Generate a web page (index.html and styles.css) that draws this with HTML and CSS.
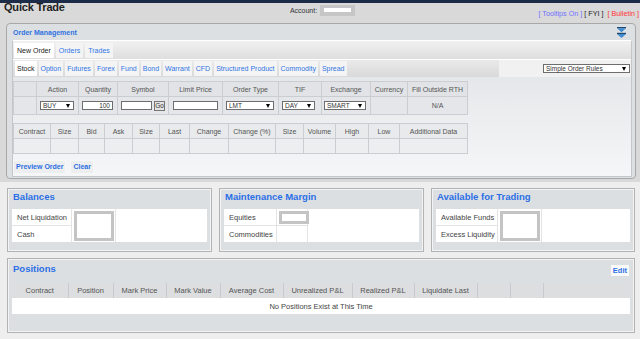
FILE: index.html
```html
<!DOCTYPE html>
<html>
<head>
<meta charset="utf-8">
<title>Quick Trade</title>
<link rel="stylesheet" href="styles.css">
</head>
<body>
<div class="upper">
  <header class="top">
    <h1 class="title">Quick Trade</h1>
    <div class="account">Account: <span class="acct-box"><span class="acct-inner"></span></span></div>
    <div class="links"><span class="l-tips">[ Tooltips On ]</span> <span class="l-fyi">[ FYI ]</span>  <span class="l-bull">[ Bulletin ]</span></div>
  </header>

  <section class="om">
    <div class="om-head">
      <span class="om-title">Order Management</span>
      <svg class="collapse" width="9" height="11" viewBox="0 0 9 11"><rect x="0" y="0" width="9" height="1.3" fill="#22476d"/><path d="M0 1.3h9L4.5 5.2z" fill="#3f8bd0"/><rect x="0" y="5.8" width="9" height="1.3" fill="#22476d"/><path d="M0 7.1h9L4.5 11z" fill="#3f8bd0"/></svg>
    </div>
    <div class="om-body">
      <div class="tabs1">
        <span class="tab sel">New Order</span><span class="tab">Orders</span><span class="tab">Trades</span>
      </div>
      <div class="tabs2row">
        <div class="tabs2">
          <span class="tab sel">Stock</span><span class="tab">Option</span><span class="tab">Futures</span><span class="tab">Forex</span><span class="tab">Fund</span><span class="tab">Bond</span><span class="tab">Warrant</span><span class="tab">CFD</span><span class="tab">Structured Product</span><span class="tab">Commodity</span><span class="tab">Spread</span>
        </div>
        <div class="rules"><span class="dd rules-dd">Simple Order Rules<i class="arr"></i></span></div>
      </div>

      <table class="grid order">
        <colgroup><col style="width:23px"><col style="width:42px"><col style="width:39px"><col style="width:51px"><col style="width:54px"><col style="width:56px"><col style="width:43px"><col style="width:49px"><col style="width:37px"><col style="width:60px"></colgroup>
        <tr class="hr"><th></th><th>Action</th><th>Quantity</th><th>Symbol</th><th>Limit Price</th><th>Order Type</th><th>TIF</th><th>Exchange</th><th>Currency</th><th>Fill Outside RTH</th></tr>
        <tr class="dr">
          <td></td>
          <td class="ctl"><span class="dd w34">BUY<i class="arr"></i></span></td>
          <td class="ctl"><span class="inp w31 num">100</span></td>
          <td class="ctl"><span class="inp w31"></span><span class="go">Go</span></td>
          <td class="ctl c4"><span class="inp w45"></span></td>
          <td class="ctl"><span class="dd w48">LMT<i class="arr"></i></span></td>
          <td class="ctl"><span class="dd w33">DAY<i class="arr"></i></span></td>
          <td class="ctl c2"><span class="dd w42">SMART<i class="arr"></i></span></td>
          <td></td>
          <td>N/A</td>
        </tr>
      </table>

      <table class="grid md">
        <colgroup><col style="width:37px"><col style="width:28px"><col style="width:26px"><col style="width:28px"><col style="width:27px"><col style="width:30px"><col style="width:39px"><col style="width:47px"><col style="width:28px"><col style="width:32px"><col style="width:33px"><col style="width:31px"><col style="width:68px"></colgroup>
        <tr class="hr"><th>Contract</th><th>Size</th><th>Bid</th><th>Ask</th><th>Size</th><th>Last</th><th>Change</th><th>Change (%)</th><th>Size</th><th>Volume</th><th>High</th><th>Low</th><th>Additional Data</th></tr>
        <tr class="dr"><td></td><td></td><td></td><td></td><td></td><td></td><td></td><td></td><td></td><td></td><td></td><td></td><td></td></tr>
      </table>

      <div class="actions"><span class="btn">Preview Order</span><span class="btn">Clear</span></div>
    </div>
  </section>
</div>

<div class="lower">
  <div class="summary">
    <section class="card">
      <h2 class="card-title">Balances</h2>
      <div class="kv kv-bal">
        <div class="lbl r1">Net Liquidation</div>
        <div class="val span2"><div class="vbox big"></div></div>
        <div class="rest span2"></div>
        <div class="lbl">Cash</div>
      </div>
    </section>
    <section class="card">
      <h2 class="card-title">Maintenance Margin</h2>
      <div class="kv kv-mm">
        <div class="lbl r1">Equities</div>
        <div class="val r1"><div class="vbox small"></div></div>
        <div class="rest span2"></div>
        <div class="lbl">Commodities</div>
        <div class="val"></div>
      </div>
    </section>
    <section class="card">
      <h2 class="card-title">Available for Trading</h2>
      <div class="kv kv-av">
        <div class="lbl r1">Available Funds</div>
        <div class="val span2"><div class="vbox big"></div></div>
        <div class="rest span2"></div>
        <div class="lbl">Excess Liquidity</div>
      </div>
    </section>
  </div>

  <section class="card positions">
    <div class="pos-head">
      <h2 class="card-title">Positions</h2>
      <span class="edit">Edit</span>
    </div>
    <table class="pos">
      <colgroup><col style="width:56px"><col style="width:45px"><col style="width:53px"><col style="width:54px"><col style="width:63px"><col style="width:69px"><col style="width:62px"><col style="width:63px"><col style="width:33px"><col style="width:33px"><col style="width:87px"></colgroup>
      <tr><th>Contract</th><th>Position</th><th>Mark Price</th><th>Mark Value</th><th>Average Cost</th><th>Unrealized P&amp;L</th><th>Realized P&amp;L</th><th>Liquidate Last</th><th></th><th></th><th></th></tr>
      <tr><td colspan="11">No Positions Exist at This Time</td></tr>
    </table>
  </section>
</div>
</body>
</html>
```

FILE: styles.css
```css
* { box-sizing: border-box; }

html, body {
  margin: 0;
  padding: 0;
}

body {
  width: 640px;
  height: 339px;
  overflow: hidden;
  font-family: "Liberation Sans", Arial, sans-serif;
  color: #333;
  background: #eeeeee;
}

/* ---------- upper area ---------- */
.upper {
  background: #d9d9d9;
  border-top: 3px solid #1c2b47;
  padding-bottom: 3px;
}

.top {
  display: grid;
  grid-template-columns: 1fr auto 1fr;
  height: 20px;
}

.title {
  margin: 0;
  padding-left: 4px;
  font-size: 11px;
  font-weight: bold;
  line-height: 9px;
  color: #1e1e1e;
  letter-spacing: -0.2px;
}

.account {
  display: flex;
  align-items: center;
  align-self: start;
  height: 11px;
  margin-top: 2px;
  padding-left: 5px;
  font-size: 7px;
  color: #333;
}

.acct-box {
  margin-left: 3px;
  width: 35px;
  height: 11px;
  padding: 3px 4px 4px;
  background: #c6c6c6;
}

.acct-inner {
  display: block;
  height: 4px;
  background: #fff;
}

.links {
  justify-self: end;
  padding-top: 6px;
  padding-right: 1px;
  font-size: 7.2px;
  white-space: pre;
}
.l-tips { color: #7272ff; }
.l-fyi { color: #222; }
.l-bull { color: #ff3535; }

/* ---------- order management ---------- */
.om {
  margin: 0 4px 0 6px;
  border: 1px solid #a8a8a8;
  border-radius: 4px;
  background: #dde0e3;
}

.om-head {
  display: flex;
  justify-content: space-between;
  align-items: center;
  height: 16px;
  padding: 0 9px 0 6px;
}

.om-title {
  font-size: 7px;
  font-weight: bold;
  color: #2f72e0;
}

.collapse { display: block; }

.om-body {
  margin: 0 3px 1px 5px;
  border: 1px solid #c4c7ca;
  border-top-color: #ffffff;
  background: linear-gradient(#dfe2e5, #f5f6f7);
}

.tab {
  font-size: 7px;
  line-height: 15px;
  height: 15px;
  padding: 0 2px;
  background: #f4f4f4;
  color: #3175e4;
  white-space: nowrap;
}
.tab.sel {
  background: #ffffff;
  color: #222;
}

.tabs1 {
  display: flex;
  gap: 2px;
  height: 19px;
  padding: 2px 1px;
  background: linear-gradient(#f1f1f1, #dedede);
  border-bottom: 1px solid #ffffff;
}
.tabs1 .tab { padding: 0 3px; }

.tabs2row {
  display: flex;
  height: 17px;
}

.tabs2 {
  display: flex;
  gap: 2px;
  width: 486px;
  padding: 1px 2px;
  background: linear-gradient(#eaeaea, #d9d9d9);
}

.rules {
  flex: 1;
  display: flex;
  justify-content: flex-end;
  align-items: flex-start;
  padding: 4px 1px 0 0;
  background: #f1f1f1;
}

/* dropdowns & inputs */
.dd, .inp, .go {
  display: inline-flex;
  align-items: center;
  height: 9px;
  border: 1px solid #6d6d6d;
  background: #fff;
  font-size: 6.5px;
  color: #333;
  vertical-align: middle;
}
.dd {
  justify-content: space-between;
  padding: 0 3px 0 2px;
}
.arr {
  display: block;
  width: 0;
  height: 0;
  border-left: 2.5px solid transparent;
  border-right: 2.5px solid transparent;
  border-top: 4px solid #000;
}
.rules-dd { width: 87px; }
.inp { padding: 0 2px; }
.num { justify-content: flex-end; }
.go {
  margin-left: 2px;
  width: 11px;
  height: 10px;
  justify-content: center;
  background: #e4e4e4;
  border-color: #777;
}
.w31 { width: 31px; }
.w33 { width: 33px; }
.w34 { width: 34px; }
.w42 { width: 42px; }
.w45 { width: 45px; }
.w48 { width: 48px; }

/* grids */
.grid {
  border-collapse: collapse;
  table-layout: fixed;
  width: 454px;
  font-size: 7px;
  color: #555;
}
.grid th, .grid td {
  border: 1px solid #cbced1;
  padding: 0;
  text-align: center;
  font-weight: normal;
  white-space: nowrap;
  overflow: hidden;
}

.order { margin-top: 4px; }
.order .hr th { height: 15px; background: #e1e3e6; }
.order .dr td { height: 18px; background: #e4e6e9; }
.order td.ctl { text-align: left; padding-left: 3px; }
.order td.c4 { padding-left: 4px; }
.order td.c2 { padding-left: 2px; }

.md { margin-top: 8px; }
.md .hr th { height: 15px; background: #e8eaec; }
.md .dr td { height: 15px; background: #eceef0; }

.actions {
  display: flex;
  gap: 4px;
  margin-top: 6px;
  padding-bottom: 2px;
}
.btn {
  height: 14px;
  line-height: 12px;
  padding: 0 2px;
  border: 1px solid #f6f7f8;
  background: #eceef0;
  font-size: 7px;
  font-weight: bold;
  color: #2d6fe0;
}

/* ---------- lower area ---------- */
.lower {
  padding: 6px 5px 0 7px;
}

.summary {
  display: grid;
  grid-template-columns: 205px 205px 204px;
  gap: 7px;
}

.card {
  border: 1px solid #b3b3b3;
  background: #dcdfe2;
  box-shadow: inset 0 0 0 1px #f3f3f3;
  padding: 0 4px 9px;
}

.card-title {
  margin: 0 0 6px;
  padding: 2px 0 0 1px;
  font-size: 9.5px;
  line-height: 12px;
  font-weight: bold;
  color: #2b6fe6;
}

.kv {
  display: grid;
  grid-template-rows: 17px 16px;
  background: #fff;
}
.kv-bal { grid-template-columns: 60px 44px 1fr; }
.kv-mm { grid-template-columns: 53px 31px 1fr; }
.kv-av { grid-template-columns: 62px 44px 1fr; }

.lbl {
  padding-left: 5px;
  font-size: 7.5px;
  color: #444;
  display: flex;
  align-items: center;
  border-right: 1px solid #e4e4e4;
}
.lbl.r1, .val.r1 { border-bottom: 1px solid #e4e4e4; }
.val {
  border-right: 1px solid #e4e4e4;
}
.span2 { grid-row: span 2; }

.vbox {
  border: 3px solid #c4c4c4;
  background: #fff;
}
.vbox.big {
  height: 30px;
  margin: 2px 1px 0 2px;
}
.vbox.small {
  height: 13px;
  margin: 2px -2px 0 2px;
}

/* positions */
.positions {
  margin-top: 6px;
  padding-bottom: 18px;
}
.pos-head {
  display: flex;
  justify-content: space-between;
  align-items: flex-start;
  height: 24px;
}
.pos-head .card-title {
  margin: 0;
  padding-top: 4px;
}
.edit {
  margin-top: 6px;
  margin-right: 1px;
  height: 11px;
  line-height: 11px;
  padding: 0 2px;
  background: #fafafa;
  font-size: 7.5px;
  font-weight: bold;
  color: #2b6fe6;
}

.pos {
  width: 618px;
  border-collapse: collapse;
  table-layout: fixed;
  font-size: 7.5px;
  color: #555;
}
.pos th {
  height: 15px;
  padding: 0;
  font-weight: normal;
  background: #dcdee0;
  border-right: 1px solid #c8cacd;
  white-space: nowrap;
}
.pos th:last-child { border-right: none; }
.pos td {
  height: 16px;
  padding: 0;
  text-align: center;
  background: #fff;
  color: #444;
}
```
